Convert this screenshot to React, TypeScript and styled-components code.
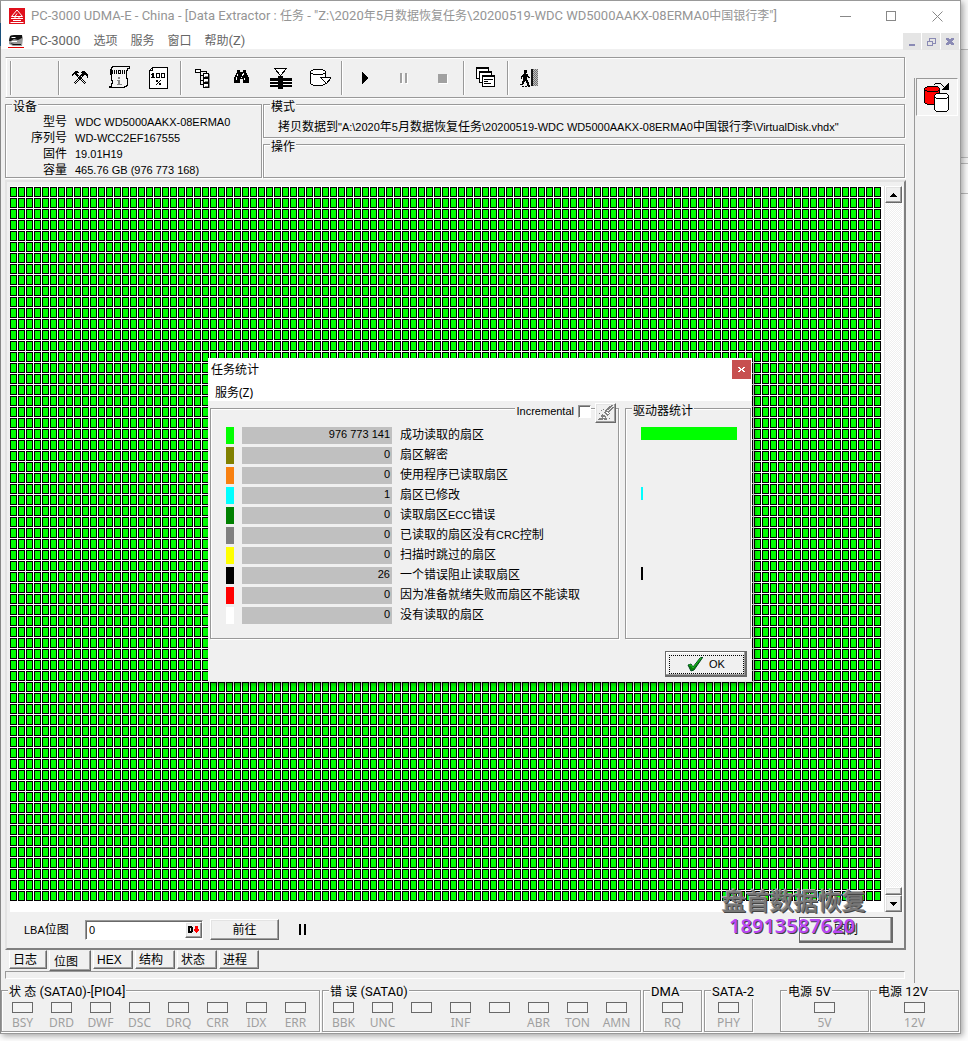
import React from "react";
import styled, { createGlobalStyle, css } from "styled-components";

const face = "#f0f0f0";
const line = "#999999";
const dark = "#696969";
const uiFont = `"Noto Sans", "Noto Sans CJK SC", sans-serif`;
const captionFont = `Roboto, "Noto Sans CJK SC", sans-serif`;
const sysFont = `"Liberation Sans", "Noto Sans CJK SC", sans-serif`;

const Global = createGlobalStyle`
  *, *::before, *::after { box-sizing: border-box; }
  body {
    margin: 0;
    font: 12px/16px ${sysFont};
    color: #000;
    background:
      linear-gradient(#1e5a8a, #1e5a8a) 0 23px / 1px 23px no-repeat,
      linear-gradient(${line}, ${line}) 0 0 / 1px 1034px no-repeat,
      linear-gradient(#f7f7f7 49px, #bbb 49px, #bbb 50px, #ececec 50px, #ececec 157px, #bbb 157px, #bbb 158px,
        #f4f4f4 158px, #f4f4f4 163px, #bbb 163px, #bbb 164px, #fafafa 164px, #fafafa 193px, #bbb 193px, #bbb 194px,
        #fdfdfd 194px);
  }
  button, input { font: inherit; color: inherit; margin: 0; padding: 0; border-radius: 0; }
`;

const Page = styled.div`
  padding: 0 7px 7px 0;
  border-bottom: 1px solid #16303a;
  overflow: hidden;
`;

const Window = styled.div`
  position: relative;
  border: 1px solid ${line};
  border-left-color: transparent;
  background: ${face};
  background-clip: padding-box;
  box-shadow: 2px 2px 6px rgba(0, 0, 0, 0.35);
`;

const TitleBar = styled.header`
  display: flex;
  align-items: center;
  height: 30px;
  padding-left: 8px;
  background: #fff;
  color: #959595;
  font-family: ${captionFont};
  font-size: 13px;
`;

const TitleText = styled.h1`
  flex: 1;
  margin: 0 0 0 6px;
  font: inherit;
  white-space: nowrap;
  overflow: hidden;
`;

const CaptionButton = styled.button`
  display: flex;
  align-items: center;
  justify-content: center;
  width: 46px;
  height: 30px;
  border: 0;
  background: none;
`;

const MenuBar = styled.nav`
  display: flex;
  align-items: center;
  height: 18px;
  padding: 2px 0 0 7px;
  background: #fff;
  color: #666;
  font-family: ${captionFont};
  font-size: 13px;
`;

const MenuItem = styled.button`
  margin: 0 7px 0 6px;
  border: 0;
  background: none;
  white-space: nowrap;
`;

const MdiButtons = styled.div`
  display: flex;
  align-self: flex-start;
  gap: 1px;
  margin-left: auto;
  padding-right: 1px;
`;

const MdiButton = styled.button`
  display: flex;
  align-items: center;
  justify-content: center;
  width: 18px;
  height: 17px;
  border: 0;
  background: #e5e5e5;
`;

const Workspace = styled.div`
  display: flex;
  align-items: stretch;
  padding: 8px 2px 0 4px;
`;

const Main = styled.main`
  flex: 1;
  min-width: 0;
`;

const SideBar = styled.aside`
  width: 44px;
  margin: 21px 0 0 9px;
  padding-left: 1px;
  border-left: 1px solid ${line};
`;

const SideButton = styled.button`
  display: flex;
  align-items: center;
  justify-content: center;
  width: 42px;
  height: 38px;
  border: 1px solid;
  border-color: ${line} #fff #fff ${line};
  background: #f4f4f4;
`;

const etched = css`
  border: 1px solid ${line};
  box-shadow: 1px 1px 0 #fff, inset 1px 1px 0 #fff;
`;

const ToolBar = styled.div`
  ${etched}
  display: flex;
  align-items: center;
  height: 41px;
  padding-left: 2px;
  border-left-color: transparent;
`;

const Separator = styled.span<{ $gap?: number }>`
  width: 2px;
  height: 34px;
  margin: 0 ${(p) => 1 + (p.$gap ?? 0)}px 0 2px;
  border-left: 1px solid ${line};
  border-right: 1px solid #fff;
`;

const ToolButton = styled.button`
  display: flex;
  align-items: center;
  justify-content: center;
  width: 39px;
  height: 34px;
  border: 0;
  background: none;
`;

const Info = styled.div`
  display: grid;
  grid-template-columns: 257px 1fr;
  gap: 6px 1px;
  margin-top: 6px;
`;

const Group = styled.section<{ $tall?: boolean }>`
  ${etched}
  height: ${(p) => (p.$tall ? 74 : 34)}px;
  grid-row: ${(p) => (p.$tall ? "span 2" : "auto")};
`;

const GroupTitle = styled.h2`
  width: fit-content;
  height: 12px;
  margin: -5px 0 0 6px;
  padding: 0 1px;
  background: ${face};
  font: 12px/14px ${sysFont};
  white-space: nowrap;
`;

const DeviceList = styled.dl`
  display: grid;
  grid-template-columns: 61px 1fr;
  column-gap: 8px;
  margin: 2px 0 0;
  line-height: 16px;
  dt { text-align: right; }
  dd { margin: 0; font-size: 11px; }
`;

const ModeText = styled.p`
  margin: 7px 0 0 14px;
  font-size: 11px;
  line-height: 16px;
  white-space: nowrap;
`;

const Han = styled.span`
  font-size: 12px;
`;

const raised = css`
  border: 1px solid;
  border-color: #fff ${dark} ${dark} #fff;
  box-shadow: inset -1px -1px 0 #a0a0a0, inset 1px 1px 0 #e3e3e3;
`;

const MapPanel = styled.section`
  position: relative;
  margin: 2px -1px 0 0;
  padding: 4px 1px 1px 3px;
  border: 2px solid;
  border-color: #e3e3e3 #808080 #808080 #e3e3e3;
`;

const MapRow = styled.div`
  display: flex;
  height: 726px;
  background: #fff;
`;

const SectorMap = styled.div`
  flex: 1;
  height: 715px;
  margin: 1px 3px 0 0;
  background:
    linear-gradient(to right, transparent 7px, #fff 7px) 0 0 / 8px 11px,
    linear-gradient(transparent 10px, #fff 10px) 0 0 / 8px 11px,
    linear-gradient(to right, #000 1px, transparent 1px, transparent 6px, #000 6px) 0 0 / 8px 11px,
    linear-gradient(#000 1px, transparent 1px, transparent 9px, #000 9px) 0 0 / 8px 11px,
    #00ff00;
`;

const ScrollBar = styled.div`
  display: flex;
  flex-direction: column;
  width: 18px;
  margin: 0 1px 0 0;
  background: repeating-conic-gradient(#fff 0 25%, #efefef 0 50%) 0 0 / 2px 2px;
  border-left: 1px solid #ddd;
`;

const ScrollButton = styled.button`
  ${raised}
  display: flex;
  align-items: center;
  justify-content: center;
  height: 17px;
  background: ${face};
`;

const ScrollThumb = styled.div`
  ${raised}
  height: 8px;
  margin-top: auto;
  background: ${face};
`;

const MapFooter = styled.div`
  display: flex;
  align-items: center;
  height: 35px;
  padding: 0 10px 0 14px;
`;

const LbaLabel = styled.label`
  width: 61px;
  font-size: 11px;
`;

const LbaField = styled.div`
  display: flex;
  width: 118px;
  height: 20px;
  margin-right: 7px;
  border: 1px solid;
  border-color: ${line} #fff #fff ${line};
  box-shadow: inset 1px 1px 0 ${dark};
  background: #fff;
  padding: 1px 0 1px 1px;
`;

const LbaInput = styled.input`
  flex: 1;
  min-width: 0;
  padding-left: 2px;
  border: 0;
  background: none;
  outline: 0;
  font-size: 11px;
`;

const Picker = styled.button`
  ${raised}
  display: flex;
  align-items: center;
  justify-content: center;
  width: 17px;
  background: ${face};
`;

const PushButton = styled.button<{ $w: number; $h: number; $strong?: boolean }>`
  ${raised}
  display: flex;
  align-items: center;
  justify-content: center;
  width: ${(p) => p.$w}px;
  height: ${(p) => p.$h}px;
  background: ${face};
  ${(p) =>
    p.$strong &&
    css`
      border-color: ${dark};
      box-shadow: inset -1px -1px 0 ${dark}, inset -2px -2px 0 #a0a0a0, inset 1px 1px 0 #fff;
    `}
`;

const PauseButton = styled.button`
  display: flex;
  width: 24px;
  height: 20px;
  margin: 0 auto 0 11px;
  align-items: center;
  justify-content: center;
  border: 0;
  background: none;
`;

const Watermark = styled.div`
  position: absolute;
  right: 38px;
  bottom: 9px;
  text-align: center;
  font: 500 24px/26px "Noto Sans CJK SC", sans-serif;
  color: #777;
  text-shadow: 1px 1px 0 #444, -1px -1px 0 #aaa;
  pointer-events: none;
`;

const WatermarkPhone = styled.div`
  padding-right: 4px;
  font: 600 20px/26px "Noto Sans", sans-serif;
  color: #b848f4;
  text-shadow: 1px 1px 0 #444;
`;

const Tabs = styled.div`
  display: flex;
  align-items: flex-start;
  gap: 2px;
  height: 21px;
  padding-left: 4px;
`;

const Tab = styled.button<{ $w: number; $active?: boolean }>`
  width: ${(p) => p.$w}px;
  height: ${(p) => (p.$active ? 21 : 19)}px;
  padding: ${(p) => (p.$active ? "2px 4px 0" : "0 3px")};
  border: 1px solid;
  border-color: transparent ${dark} ${dark} #fff;
  box-shadow: inset -1px -1px 0 #a0a0a0;
  background: ${face};
  text-align: left;
  white-space: nowrap;
`;

const StatusLine = styled.div`
  height: 8px;
  margin-bottom: 4px;
  border: 1px solid;
  border-color: ${line} #fff #fff ${line};
`;

const LedStrip = styled.footer`
  display: flex;
  gap: 2px;
  margin-top: 7px;
  padding-bottom: 1px;
`;

const LedGroup = styled.section<{ $w: number; $before?: number }>`
  ${etched}
  flex: 0 1 ${(p) => p.$w}px;
  min-width: 0;
  height: 42px;
  margin-left: ${(p) => p.$before ?? 0}px;
`;

const LedTitle = styled(GroupTitle)`
  margin-top: -6px;
  font: 13px/14px ${captionFont};
  height: 14px;
`;

const LedRow = styled.div<{ $center?: boolean }>`
  display: flex;
  justify-content: ${(p) => (p.$center ? "center" : "flex-start")};
  padding: 3px 1px 0;
`;

const Led = styled.div`
  display: flex;
  flex-direction: column;
  align-items: center;
  gap: 2px;
  width: 39px;
  color: #a0a0a0;
  font: 12px/16px ${uiFont};
  &::before {
    content: "";
    width: 21px;
    height: 11px;
    border: 1px solid ${dark};
    background: #f4f4f4;
  }
`;

const Overlay = styled.div`
  position: absolute;
  inset: 0;
  display: flex;
  justify-content: center;
  align-items: flex-start;
  padding: 357px 1px 0 0;
`;

const Dialog = styled.div`
  width: 544px;
  background: ${face};
  box-shadow: 2px 2px 5px rgba(0, 0, 0, 0.45);
`;

const DialogHead = styled.div`
  height: 43px;
  padding: 2px 1px 0 3px;
  background: #fff;
  font-family: ${uiFont};
`;

const DialogTitle = styled.div`
  display: flex;
  justify-content: space-between;
  align-items: flex-start;
  height: 20px;
  line-height: 20px;
`;

const CloseButton = styled.button`
  display: flex;
  align-items: center;
  justify-content: center;
  width: 19px;
  height: 19px;
  border: 0;
  background: #c75050;
`;

const DialogMenu = styled.button`
  display: block;
  margin: 5px 0 0 4px;
  border: 0;
  background: none;
`;

const DialogBody = styled.div`
  display: flex;
  gap: 6px;
  padding: 7px 1px 0 2px;
`;

const StatsGroup = styled(Group)`
  flex: 1;
  height: 231px;
`;

const DriveGroup = styled(Group)`
  width: 126px;
  height: 231px;
`;

const Options = styled.div`
  display: flex;
  align-items: flex-start;
  width: fit-content;
  height: 20px;
  margin: -6px 2px 0 auto;
  font-size: 11px;
  label {
    display: flex;
    align-items: center;
    gap: 4px;
    height: 16px;
    padding-left: 2px;
    background: ${face};
  }
`;

const Check = styled.input`
  appearance: none;
  width: 13px;
  height: 13px;
  border: 1px solid;
  border-color: ${line} #fff #fff ${line};
  box-shadow: inset 1px 1px 0 ${dark};
  background: #fff;
`;

const EraseButton = styled.button`
  ${raised}
  display: flex;
  align-items: center;
  justify-content: center;
  width: 21px;
  height: 20px;
  margin-left: 4px;
  background: ${face};
`;

const StatList = styled.ul`
  display: grid;
  gap: 3px;
  margin: 4px 0 0 15px;
  padding: 0;
  list-style: none;
`;

const StatRow = styled.li`
  display: flex;
  gap: 8px;
  height: 17px;
  line-height: 17px;
`;

const Swatch = styled.span<{ $color: string }>`
  width: 8px;
  background: ${(p) => p.$color};
`;

const StatValue = styled.output`
  width: 150px;
  padding-right: 2px;
  background: #c0c0c0;
  font-size: 11px;
  line-height: 15px;
  text-align: right;
`;

const DriveBars = styled(StatList)`
  margin-top: 11px;
`;

const DriveBar = styled.li<{ $color: string }>`
  height: 17px;
  &::before {
    content: "";
    display: block;
    width: inherit;
    height: 13px;
    background: ${(p) => p.$color};
  }
`;

const DialogActions = styled.div`
  display: flex;
  justify-content: flex-end;
  padding: 12px 5px 5px;
  font-size: 11px;
`;

const FocusRing = styled.span`
  display: flex;
  align-items: center;
  justify-content: center;
  gap: 6px;
  width: 75px;
  height: 19px;
  border: 1px dotted #000;
`;

type IconProps = { w?: number; h?: number; children: React.ReactNode };
const Icon = ({ w = 23, h = 23, children }: IconProps) => (
  <svg width={w} height={h} viewBox={`0 0 ${w} ${h}`} shapeRendering="crispEdges" fill="none" aria-hidden="true">
    {children}
  </svg>
);

const split = (text: string) =>
  text.split(/([\u4e00-\u9fff]+)/).map((run, i) => (i % 2 ? <Han key={i}>{run}</Han> : run));

const icons = {
  tools: (
    <Icon>
      <path d="M3 10V8h1V7h1V6h1V5h3v1h1v1H8v1h1v1h1v1h-1v1H8v-1H7V9H6V8H5v1H4v1zM13 5h3v1h1v1h1v1h1v4h-1v-2h-1V9h-2v1h-2v1h-1v-1h-1V9h1V8h1V7h-1V6h1z" fill="#000" />
      <path d="M8.500 10.500l8 8M9.500 9.500l8 8M13.500 10.500l-8 8M12.500 9.500l-8 8" stroke="#000" />
      <path d="M9.500 10.500l7 7M12.500 10.500l-7 7" stroke="#f0f0f0" strokeDasharray="1 2" />
    </Icon>
  ),
  scroll: (
    <Icon>
      <path d="M4.500 .5h17v2h-2v2h-1v6l1 4v4l-1 2h-2v1h-15v-1h2v-3h1v-3h-1v-4l-1-4V4.500l1-2z" fill="#f4f4f4" stroke="#000" />
      <path d="M3.500 4.500h1v3h-1zM6.500 4v4M8.500 4v4M10.500 4.500h2v3h-2zM14.500 4v4M16.500 4v4" stroke="#000" />
      <path d="M10 11h2v2h-2zM9 14h3v4h2v1H9v-1h1v-3H9z" fill="#888" />
    </Icon>
  ),
  page: (
    <Icon>
      <path d="M5.500 1.500h15v21h-18v-18z" fill="#fff" stroke="#000" />
      <path d="M5.500 1.500v3h-3" stroke="#000" />
      <path d="M5 7h2v4h1v1H4v-1h1V9H4V8h1zM9 7h4v5H9zM14 7h4v5h-4z" fill="#000" />
      <path d="M10 8h2v3h-2zM15 8h2v3h-2z" fill="#fff" />
      <path d="M9 14h2v2H9zM12 17h2v2h-2zM13 14h1v1h-1v1h-1v1h-1v1h-1v1H9v-1h1v-1h1v-1h1v-1h1z" fill="#000" />
    </Icon>
  ),
  tree: (
    <Icon>
      <path d="M4.500 3.500h5v3h-5zM12.500 7.500h5v4h-5zM12.500 12.500h5v4h-5zM12.500 17.500h5v4h-5z" fill="#fff" stroke="#000" />
      <path d="M9.500 5.500h6v2M9.500 6.500v12h3M9.500 14.500h3M9.500 9.500h3" stroke="#000" />
      <path d="M18.500 8v14M14 10.500h3M14 15.500h3M14 20.500h3" stroke="#888" />
    </Icon>
  ),
  find: (
    <Icon>
      <path d="M7 4h3v2h3V4h3v3h1v2h1v2h1v6h-6v-4h-3v4H4v-6h1V9h1V7h1z" fill="#000" />
      <path d="M7.500 8v2M6.500 11v3M12.500 8v2M13.500 7v2M14.500 12v2M11 11.500h1" stroke="#fff" />
    </Icon>
  ),
  filter: (
    <Icon>
      <path d="M5.500 2.500h12l-6 7z" fill="#fff" stroke="#000" />
      <path d="M1 12h22v3H1zM1 16h22v2H1zM1 19h22v2H1zM9 10h5v13H9z" fill="#000" />
      <path d="M1 15.500h8M14 15.500h9M1 18.500h8M14 18.500h9" stroke="#fff" />
    </Icon>
  ),
  disk: (
    <Icon>
      <path d="M2.500 5.500v12l3 2h9l3-2v-12l-3-2h-9zM2.500 6.500l3 2h9l3-2" fill="#fff" stroke="#000" />
      <path d="M12.500 11.500h11l-5 6z" fill="#fff" stroke="#000" />
    </Icon>
  ),
  play: (
    <Icon>
      <path d="M10 6h1v1h1v1h1v1h1v1h1v1h1v2h-1v1h-1v1h-1v1h-1v1h-1v1h-1z" fill="#000" />
    </Icon>
  ),
  pause: (
    <Icon>
      <path d="M10 8h2v10h-2zM15 8h2v10h-2z" fill="#fff" />
      <path d="M9 7h2v10H9zM14 7h2v10h-2z" fill="#a0a0a0" />
    </Icon>
  ),
  stop: (
    <Icon>
      <path d="M9 9h9v9H9z" fill="#fff" />
      <path d="M8 8h9v9H8z" fill="#a0a0a0" />
    </Icon>
  ),
  windows: (
    <Icon>
      <path d="M2.500 1.500h12v11h-12z" fill="#fff" stroke="#000" />
      <path d="M2.500 2.500h12" stroke="#000" />
      <path d="M5.500 5.500h12v11h-12z" fill="#fff" stroke="#000" />
      <path d="M5.500 6.500h12" stroke="#000" />
      <path d="M8.500 9.500h12v11h-12z" fill="#fff" stroke="#000" />
      <path d="M8.500 10.500h12M10 13.500h9M10 15.500h4M10 17.500h7" stroke="#000" />
    </Icon>
  ),
  exit: (
    <Icon>
      <path d="M6 4h3v3H8v1h2v2h1v1h1v1h-2v-1H9v3h1v2h1v3h1v1h-3v-3H8v-2H7v1H6v2H5v1H2v-1h2v-3h1v-4H4v2H3v-3h1V9h1V8h1z" fill="#000" />
      <path d="M4 20.500h8" stroke="#000" strokeDasharray="2 1" />
      <path d="M13 3h2v17h-2z" fill="#111" />
      <path d="M15 3h5v17h-5z" fill="#c0c0c0" />
      <path d="M15.500 3v17M17.500 3v17M19.500 3v17" stroke="#707070" strokeDasharray="1 1" />
      <path d="M16.500 4v16M18.500 4v16" stroke="#707070" strokeDasharray="1 1" />
    </Icon>
  ),
};

const toolGroups: [keyof typeof icons, string][][] = [
  [["tools", "工具"], ["scroll", "信息"], ["page", "报告"]],
  [["tree", "结构"], ["find", "查找"], ["filter", "筛选"], ["disk", "保存"]],
  [["play", "开始"], ["pause", "暂停"], ["stop", "停止"]],
  [["windows", "窗口"]],
  [["exit", "退出"]],
];

const device = [
  ["型号", "WDC WD5000AAKX-08ERMA0"],
  ["序列号", "WD-WCC2EF167555"],
  ["固件", "19.01H19"],
  ["容量", "465.76 GB (976 773 168)"],
];

const stats = [
  { color: "#00ff00", value: "976 773 141", label: "成功读取的扇区", bar: 96 },
  { color: "#808000", value: "0", label: "扇区解密", bar: 0 },
  { color: "#f88010", value: "0", label: "使用程序已读取扇区", bar: 0 },
  { color: "#00ffff", value: "1", label: "扇区已修改", bar: 2 },
  { color: "#008000", value: "0", label: "读取扇区ECC错误", bar: 0 },
  { color: "#808080", value: "0", label: "已读取的扇区没有CRC控制", bar: 0 },
  { color: "#ffff00", value: "0", label: "扫描时跳过的扇区", bar: 0 },
  { color: "#000000", value: "26", label: "一个错误阻止读取扇区", bar: 2 },
  { color: "#ff0000", value: "0", label: "因为准备就绪失败而扇区不能读取", bar: 0 },
  { color: "#ffffff", value: "0", label: "没有读取的扇区", bar: 0 },
];

const StatLabel = styled.span`
  font-size: 11px;
`;

const tabs = [
  { label: "日志", w: 38 },
  { label: "位图", w: 42, active: true },
  { label: "HEX", w: 40 },
  { label: "结构", w: 40 },
  { label: "状态", w: 40 },
  { label: "进程", w: 40 },
];

const ledGroups = [
  { title: "状 态 (SATA0)-[PIO4]", w: 319, leds: ["BSY", "DRD", "DWF", "DSC", "DRQ", "CRR", "IDX", "ERR"] },
  { title: "错 误 (SATA0)", w: 319, leds: ["BBK", "UNC", "", "INF", "", "ABR", "TON", "AMN"] },
  { title: "DMA", w: 59, leds: ["RQ"] },
  { title: "SATA-2", w: 49, leds: ["PHY"] },
  { title: "电源 5V", w: 89, before: 25, leds: ["5V"] },
  { title: "电源 12V", w: 89, before: -1, leds: ["12V"] },
];

const StatsDialog = () => (
  <Overlay>
    <Dialog role="dialog" aria-label="任务统计">
      <DialogHead>
        <DialogTitle>
          <span>任务统计</span>
          <CloseButton aria-label="关闭">
            <Icon w={7} h={7}>
              <path d="M0 1h2v1h1v1h1V2h1V1h2v1H6v1H5v1h1v1h1v1H5V5H4V4H3v1H2v1H0V5h1V4h1V3H1V2H0z" fill="#fff" />
            </Icon>
          </CloseButton>
        </DialogTitle>
        <DialogMenu>服务(Z)</DialogMenu>
      </DialogHead>
      <DialogBody>
        <StatsGroup>
          <Options>
            <label>
              Incremental <Check type="checkbox" />
            </label>
            <EraseButton aria-label="清除">
              <Icon w={17} h={16}>
                <path d="M15.500 0l-5 5M16.500 2l-5 5M13.500 1l-4 4" stroke="#808080" />
                <path d="M8 5h2v1h2v2h1v1h-1v1h-1v1h-1v-1H9V9H8V8H7V7h1zM5 9h1v1h2v1h1v2h1v2H7v-1H6v1H4v-2h1v-1H4v-2h1zM2 13h2v2H1v-1h1zM4 5h1v1H4zM6 4h1v1H6zM2 8h1v1H2zM12 13h1v1h-1z" fill="#808080" />
                <path d="M9 7h1v1h1v1M6 12h1v1" stroke="#fff" />
              </Icon>
            </EraseButton>
          </Options>
          <StatList>
            {stats.map((s) => (
              <StatRow key={s.label}>
                <Swatch $color={s.color} />
                <StatValue>{s.value}</StatValue>
                <StatLabel>{split(s.label)}</StatLabel>
              </StatRow>
            ))}
          </StatList>
        </StatsGroup>
        <DriveGroup>
          <GroupTitle>驱动器统计</GroupTitle>
          <DriveBars>
            {stats.map((s) => (
              <DriveBar key={s.label} $color={s.color} style={{ width: s.bar }} />
            ))}
          </DriveBars>
        </DriveGroup>
      </DialogBody>
      <DialogActions>
        <PushButton $w={82} $h={26} $strong>
          <FocusRing>
            <svg width="16" height="15" viewBox="0 0 16 15" aria-hidden="true">
              <path d="M1 8l3-1 2 3 7-9 3-1-9 13-3 1z" fill="#0a7d0a" stroke="#004a20" strokeWidth="1" />
              <path d="M2 8l2 0 2 3 8-10" fill="none" stroke="#20c020" strokeWidth="1" />
            </svg>
            OK
          </FocusRing>
        </PushButton>
      </DialogActions>
    </Dialog>
  </Overlay>
);

export default function App() {
  return (
    <Page>
      <Global />
      <Window>
        <TitleBar>
          <svg width="16" height="16" viewBox="0 0 16 16" aria-hidden="true">
            <path d="M0 0h16v16H0z" fill="#e0101c" />
            <path d="M8 2l-5.500 6.500h11zM8 5.500l-2 3M2 10.500h12M4 12.500h8M1.500 14.500h13M6 9v2M10 9v2" fill="none" stroke="#fff" />
          </svg>
          <TitleText>
            {split(`PC-3000 UDMA-E - China - [Data Extractor : 任务 - "Z:\\2020年5月数据恢复任务\\20200519-WDC WD5000AAKX-08ERMA0中国银行李"]`)}
          </TitleText>
          <CaptionButton aria-label="最小化">
            <Icon w={11} h={11}><path d="M0 5.500h11" stroke="#888" /></Icon>
          </CaptionButton>
          <CaptionButton aria-label="最大化">
            <Icon w={11} h={11}><path d="M.5.5h9v9h-9z" stroke="#888" /></Icon>
          </CaptionButton>
          <CaptionButton aria-label="关闭">
            <svg width="11" height="11" viewBox="0 0 11 11" aria-hidden="true">
              <path d="M.5.5l10 10M10.500.5l-10 10" stroke="#888" />
            </svg>
          </CaptionButton>
        </TitleBar>

        <MenuBar>
          <svg width="17" height="15" viewBox="0 0 17 15" aria-hidden="true">
            <path d="M3 1h11l1 3-1 8H5L1 10V5z" fill="#999" />
            <path d="M2 2l4-1h8v3l-4 2-4-1-3 2H1zM2 9l3 2h8v-1H6z" fill="#111" />
            <path d="M4 3l4 0-1 1H3zM3 7h6v1H4z" fill="#fff" />
            <path d="M0 13h16v1H0z" fill="#e00000" />
          </svg>
          {["PC-3000", "选项", "服务", "窗口", "帮助(Z)"].map((m) => (
            <MenuItem key={m}>{split(m)}</MenuItem>
          ))}
          <MdiButtons>
            <MdiButton aria-label="最小化子窗口">
              <Icon w={10} h={10}><path d="M2 7h6v2H2z" fill="#8a8ab4" /></Icon>
            </MdiButton>
            <MdiButton aria-label="还原子窗口">
              <Icon w={10} h={10}>
                <path d="M3 1h6v5H7M1 4.500h5M1.500 4v4.500h5V4M3.500 1v3M3 1.500h6" stroke="#8a8ab4" />
              </Icon>
            </MdiButton>
            <MdiButton aria-label="关闭子窗口">
              <Icon w={10} h={10}>
                <path d="M1 1h3v1h2V1h3v2H8v1H7v1h1v1h1v2H6V7H4v1H1V6h1V5h1V4H2V3H1z" fill="#8a8ab4" />
              </Icon>
            </MdiButton>
          </MdiButtons>
        </MenuBar>

        <Workspace>
          <Main>
            <ToolBar>
              <Separator $gap={43} />
              {toolGroups.map((group, i) => (
                <React.Fragment key={i}>
                  <Separator />
                  {group.map(([name, label]) => (
                    <ToolButton key={name} aria-label={label}>{icons[name]}</ToolButton>
                  ))}
                </React.Fragment>
              ))}
            </ToolBar>

            <Info>
              <Group $tall>
                <GroupTitle>设备</GroupTitle>
                <DeviceList>
                  {device.map(([name, value]) => (
                    <React.Fragment key={name}>
                      <dt>{name}</dt>
                      <dd>{value}</dd>
                    </React.Fragment>
                  ))}
                </DeviceList>
              </Group>
              <Group>
                <GroupTitle>模式</GroupTitle>
                <ModeText>
                  {split(`拷贝数据到"A:\\2020年5月数据恢复任务\\20200519-WDC WD5000AAKX-08ERMA0中国银行李\\VirtualDisk.vhdx"`)}
                </ModeText>
              </Group>
              <Group>
                <GroupTitle>操作</GroupTitle>
              </Group>
            </Info>

            <MapPanel>
              <MapRow>
                <SectorMap role="img" aria-label="扇区位图" />
                <ScrollBar>
                  <ScrollButton aria-label="向上">
                    <Icon w={7} h={4}><path d="M3 0h1v1h1v1h1v1h1v1H0V3h1V2h1V1h1z" fill="#000" /></Icon>
                  </ScrollButton>
                  <ScrollThumb />
                  <ScrollButton aria-label="向下">
                    <Icon w={7} h={4}><path d="M0 0h7v1H6v1H5v1H4v1H3V3H2V2H1V1H0z" fill="#000" /></Icon>
                  </ScrollButton>
                </ScrollBar>
              </MapRow>
              <MapFooter>
                <LbaLabel htmlFor="lba">{split("LBA位图")}</LbaLabel>
                <LbaField>
                  <LbaInput id="lba" defaultValue="0" />
                  <Picker aria-label="进制">
                    <Icon w={11} h={9}>
                      <path d="M0 1h4v1h1v5H4v1H0zM2 3v3h1V3z" fill="#000" fillRule="evenodd" />
                      <path d="M7 1h3v3h1v2h-1v1H9v1H8V7H7V6H6V4h1z" fill="#f00" />
                    </Icon>
                  </Picker>
                </LbaField>
                <PushButton $w={69} $h={21}>前往</PushButton>
                <PauseButton aria-label="暂停">
                  <Icon w={7} h={11}><path d="M0 0h2v11H0zM5 0h2v11H5z" fill="#000" /></Icon>
                </PauseButton>
                <PushButton $w={94} $h={26} $strong>图例</PushButton>
              </MapFooter>
              <Watermark>
                盘首数据恢复
                <WatermarkPhone>18913587620</WatermarkPhone>
              </Watermark>
            </MapPanel>

            <Tabs role="tablist">
              {tabs.map((t) => (
                <Tab key={t.label} role="tab" aria-selected={!!t.active} $w={t.w} $active={t.active}>
                  {t.label}
                </Tab>
              ))}
            </Tabs>
            <StatusLine />
          </Main>
          <SideBar>
            <SideButton aria-label="复制磁盘">
              <Icon w={26} h={30}>
                <path d="M9.500 3.500l2-2h5l4 4" stroke="#000" />
                <path d="M25 0v8h-8z" fill="#000" />
                <path d="M.5 6.500v14l3 2h10l2-2v-14l-2-2h-10z" fill="#f00" stroke="#000" />
                <path d="M.5 7.500l3 2h10l2-2" stroke="#000" />
                <path d="M10.500 13.500v14l2 2h10l2-2v-14l-2-2h-10zM10.500 14.500l2 2h10l2-2" fill="#fff" stroke="#000" />
              </Icon>
            </SideButton>
          </SideBar>
        </Workspace>

        <LedStrip>
          {ledGroups.map((g) => (
            <LedGroup key={g.title} $w={g.w} $before={g.before}>
              <LedTitle>{split(g.title)}</LedTitle>
              <LedRow $center={g.leds.length === 1}>
                {g.leds.map((led, i) => (
                  <Led key={i}>{led}</Led>
                ))}
              </LedRow>
            </LedGroup>
          ))}
        </LedStrip>
        <StatsDialog />
      </Window>
    </Page>
  );
}
